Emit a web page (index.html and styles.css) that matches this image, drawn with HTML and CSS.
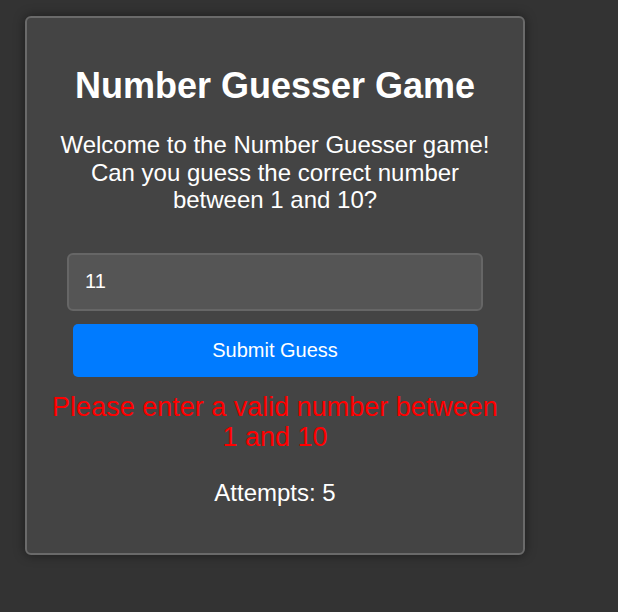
FILE: index.html
```html
<!DOCTYPE html>
<html>
<head>
<meta charset="utf-8">
<link rel="stylesheet" href="styles.css">
</head>
<body>
<div class="card">
  <h1 class="title">Number Guesser Game</h1>
  <p class="intro">Welcome to the Number Guesser game! Can you guess the correct number between 1 and 10?</p>
  <input class="guess-input" type="text" value="11">
  <button class="submit-btn">Submit Guess</button>
  <p class="message">Please enter a valid number between 1 and 10</p>
  <p class="attempts">Attempts: 5</p>
</div>
</body>
</html>
```
FILE: styles.css
```css
html, body {
  margin: 0;
  padding: 0;
  background: #333333;
  font-family: "Liberation Sans", Arial, sans-serif;
  color: #ffffff;
}
body {
  padding: 16px 0 0 25px;
  height: 612px;
  box-sizing: border-box;
}
.card {
  width: 416px;
  background: #444444;
  border: 2px solid #6a6a6a;
  border-radius: 6px;
  box-shadow: 0 0 12px rgba(0, 0, 0, 0.45);
  padding: 48px 40px 47px;
  display: flex;
  flex-direction: column;
  align-items: center;
  text-align: center;
}
.title {
  margin: 0;
  font-size: 36px;
  font-weight: bold;
  line-height: 40px;
}
.intro {
  margin: 25px 0 0;
  font-size: 24px;
  line-height: 27.6px;
  width: 440px;
}
.guess-input {
  margin-top: 39px;
  width: 416px;
  height: 58px;
  box-sizing: border-box;
  background: #555555;
  border: 2px solid #666666;
  border-radius: 6px;
  color: #ffffff;
  font-family: "Liberation Sans", Arial, sans-serif;
  font-size: 20px;
  padding: 0 16px;
  outline: none;
}
.submit-btn {
  margin-top: 13px;
  width: 405px;
  height: 53px;
  background: #007bff;
  border: none;
  border-radius: 5px;
  color: #ffffff;
  font-family: "Liberation Sans", Arial, sans-serif;
  font-size: 20px;
}
.message {
  margin: 15px 0 0;
  color: #ff0000;
  font-size: 27px;
  line-height: 30.4px;
  width: 452px;
}
.attempts {
  margin: 26px 0 0;
  font-size: 24px;
  line-height: 27.6px;
}
```
